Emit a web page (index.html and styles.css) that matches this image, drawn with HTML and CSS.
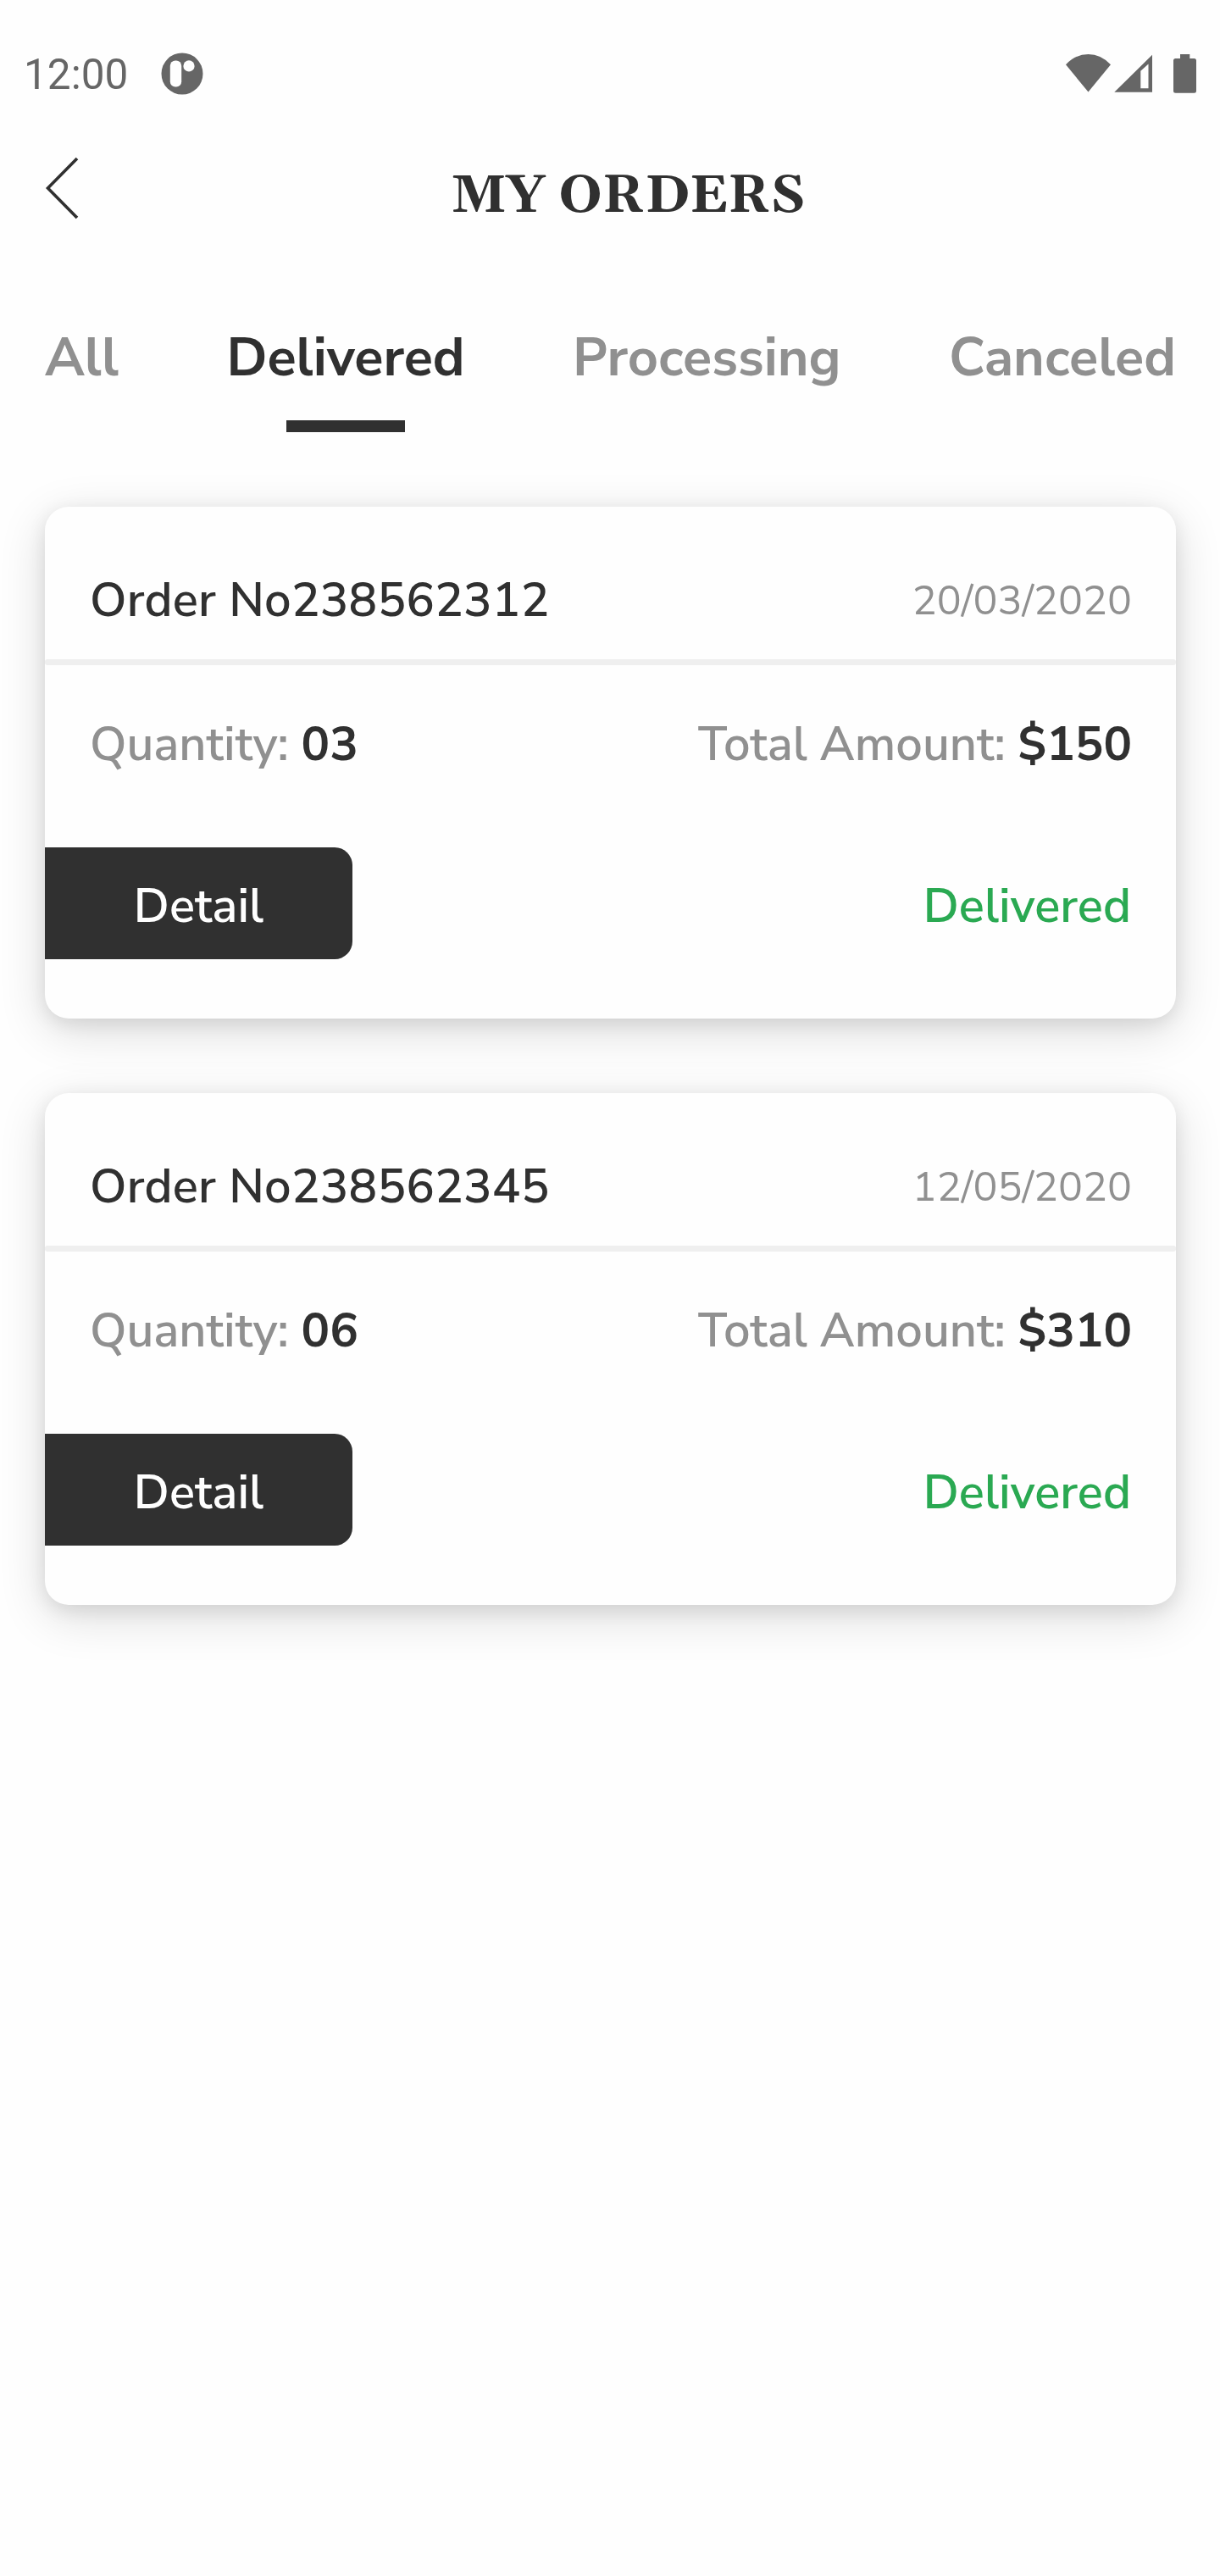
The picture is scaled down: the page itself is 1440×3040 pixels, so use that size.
FILE: index.html
```html
<!DOCTYPE html>
<html lang="en">
<head>
<meta charset="utf-8">
<title>My Orders</title>
<link rel="stylesheet" href="styles.css">
</head>
<body>
<div class="status-bar">
  <span class="clock">12:00</span>
  <svg class="app-icon" width="50" height="50" viewBox="0 0 50 50">
    <circle cx="25" cy="25" r="24.5" fill="#666"/>
    <rect x="10.8" y="9.5" width="13.4" height="31" rx="6.2" fill="#fefefe"/>
    <circle cx="33" cy="15.9" r="6.6" fill="#fefefe"/>
  </svg>
  <svg class="system-icons" width="156" height="48" viewBox="0 0 156 48" fill="#666">
    <path d="M0 13.3Q11.5 1 26.5 1T53 13.3L26.5 45.5Z"/>
    <path fill-rule="evenodd" d="M57.3 45.7L102 1.7V45.7ZM88.3 20.7V41.2H97.5V12.5Z"/>
    <path d="M135 1h11.3v5h5.200q2.500 0 2.500 2.500v35.700q0 2.500-2.500 2.500h-22q-2.500 0-2.500-2.500V8.500q0-2.500 2.500-2.500h5.500z"/>
  </svg>
</div>
<header class="top">
  <svg class="back" width="42" height="76" viewBox="0 0 42 76"><path d="M38 3L3.500 38L38 73" fill="none" stroke="#303030" stroke-width="3.600"/></svg>
  <h1 class="title">MY ORDERS</h1>
</header>
<nav class="tabs">
  <a class="tab">All</a>
  <a class="tab active">Delivered</a>
  <a class="tab">Processing</a>
  <a class="tab">Canceled</a>
</nav>
<main class="orders">
  <article class="card">
    <div class="card-head"><span class="order-no">Order No238562312</span><span class="date">20/03/2020</span></div>
    <div class="divider"></div>
    <div class="summary"><span>Quantity: <b>03</b></span><span>Total Amount: <b>$150</b></span></div>
    <div class="actions"><button class="detail">Detail</button><span class="state">Delivered</span></div>
  </article>
  <article class="card">
    <div class="card-head"><span class="order-no">Order No238562345</span><span class="date">12/05/2020</span></div>
    <div class="divider"></div>
    <div class="summary"><span>Quantity: <b>06</b></span><span>Total Amount: <b>$310</b></span></div>
    <div class="actions"><button class="detail">Detail</button><span class="state">Delivered</span></div>
  </article>
</main>
</body>
</html>
```
FILE: styles.css
```css
* { box-sizing: border-box; }
body {
  margin: 0;
  min-height: 3040px;
  background: #fefefe;
  color: #303030;
  font-family: "Nunito Sans", "Nunito", "Open Sans", sans-serif;
}
.status-bar {
  display: flex;
  align-items: center;
  height: 173px;
  padding: 0 26px 0 28px;
}
.clock { font: 400 49.500px/58px Roboto, sans-serif; color: #666; width: 162px; padding-top: 2px; }
.app-icon { display: block; }
.system-icons { display: block; margin-left: auto; }
.top {
  display: flex;
  align-items: center;
  height: 97px;
  padding: 0 53px;
}
.back { display: block; flex: none; }
.title {
  flex: 1;
  margin: 0 0 0 1px;
  padding-top: 20px;
  text-align: center;
  font: 700 63px/80px Gelasio, "Liberation Serif", serif;
}
.tabs {
  display: flex;
  justify-content: space-between;
  height: 328px;
  padding: 109px 52px 0 53px;
}
.tab {
  display: flex;
  flex-direction: column;
  align-items: center;
  gap: 30px;
  font-size: 63px;
  line-height: 87px;
  font-weight: 700;
  color: #909090;
}
.tab.active { color: #303030; }
.tab.active::after { content: ""; width: 140px; height: 14px; background: #303030; }
.orders {
  display: flex;
  flex-direction: column;
  gap: 88px;
  padding: 0 52px 0 53px;
}
.card {
  height: 604px;
  border-radius: 28px;
  background: #fefefe;
  box-shadow: 0 14px 56px rgba(0, 0, 0, .14), 0 6px 22px rgba(0, 0, 0, .09);
  font-size: 56px;
  line-height: 76px;
  font-weight: 600;
}
.card-head {
  display: flex;
  justify-content: space-between;
  align-items: center;
  height: 180px;
  padding: 41px 52px 0 53px;
}
.order-no { letter-spacing: .25px; }
.date { font-size: 48.300px; font-weight: 400; color: #909090; }
.divider { height: 7px; border-radius: 3px; background: #efefef; }
.summary {
  display: flex;
  justify-content: space-between;
  height: 215px;
  padding: 56px 52px 0 53px;
  color: #909090;
}
.summary b { font-weight: 700; color: #303030; }
.actions {
  display: flex;
  justify-content: space-between;
  height: 132px;
  padding-right: 53px;
}
.detail {
  width: 363px;
  height: 132px;
  padding: 7px 0 0;
  border: 0;
  border-radius: 0 21px 21px 0;
  background: #303030;
  color: #fefefe;
  font: inherit;
}
.state { padding-top: 32px; color: #2aa952; }
```
